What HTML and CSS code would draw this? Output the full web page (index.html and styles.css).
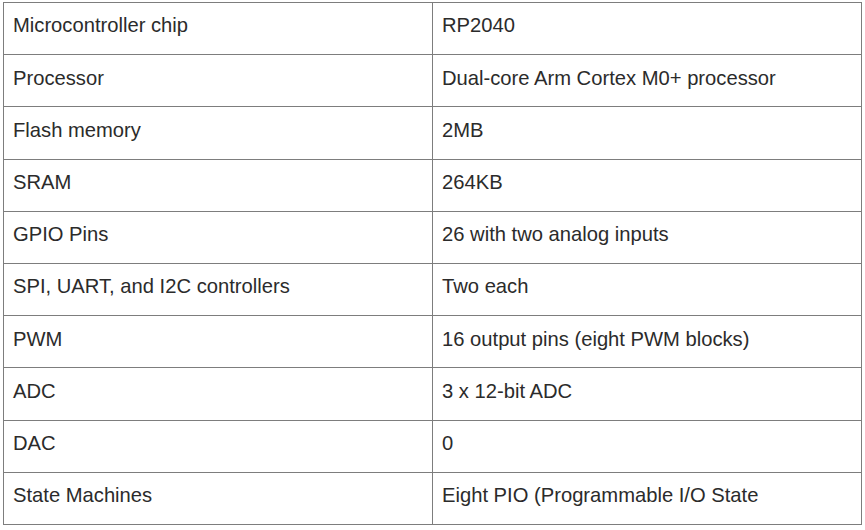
FILE: index.html
```html
<!DOCTYPE html>
<html>
<head>
<meta charset="utf-8">
<link rel="stylesheet" href="styles.css">
</head>
<body>
<table class="spec">
<tbody>
<tr><td>Microcontroller chip</td><td>RP2040</td></tr>
<tr><td>Processor</td><td>Dual-core Arm Cortex M0+ processor</td></tr>
<tr><td>Flash memory</td><td>2MB</td></tr>
<tr><td>SRAM</td><td>264KB</td></tr>
<tr><td>GPIO Pins</td><td>26 with two analog inputs</td></tr>
<tr><td>SPI, UART, and I2C controllers</td><td>Two each</td></tr>
<tr><td>PWM</td><td>16 output pins (eight PWM blocks)</td></tr>
<tr><td>ADC</td><td>3 x 12-bit ADC</td></tr>
<tr><td>DAC</td><td>0</td></tr>
<tr><td>State Machines</td><td>Eight PIO (Programmable I/O State</td></tr>
</tbody>
</table>
</body>
</html>
```
FILE: styles.css
```css
html, body {
  margin: 0;
  padding: 0;
  background: #ffffff;
}
body {
  padding: 2px 0 0 3px;
}
.spec {
  border-collapse: collapse;
  table-layout: fixed;
  width: 859px;
  font-family: "Liberation Sans", Arial, sans-serif;
  font-size: 20.2px;
  color: #2b2b2b;
}
.spec td {
  border: 1px solid #7d7d7d;
  padding: 7.4px 9px 13.8px 9px;
  line-height: 30px;
  vertical-align: top;
  width: 50%;
  white-space: nowrap;
}
```
